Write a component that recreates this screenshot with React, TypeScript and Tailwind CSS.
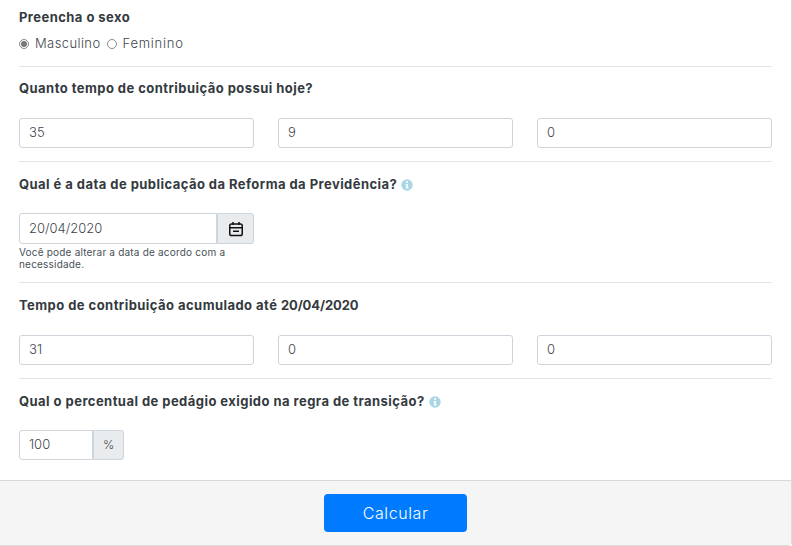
import React from "react";

const font = "font-['Inter','Liberation_Sans',sans-serif]";

function Title({ children, info }: { children: React.ReactNode; info?: boolean }) {
  return (
    <div className="flex items-center h-[18px] text-[13px] font-bold text-[#343a40] whitespace-nowrap tracking-[0.45px]">
      <span>{children}</span>
      {info && (
        <svg viewBox="0 0 12 12" className="w-[12px] h-[12px] ml-[4px]">
          <circle cx="6" cy="6" r="5.7" fill="#a9d6e5" />
          <rect x="5.1" y="2.2" width="1.9" height="1.7" fill="#fff" />
          <path d="M4.5 5h2.5v3.6h.7v1H4.5v-1h.8V6h-.8z" fill="#fff" />
        </svg>
      )}
    </div>
  );
}

function Field({ value, className = "" }: { value: string; className?: string }) {
  return (
    <div className={`h-[30px] flex items-center px-[9px] border border-[#ced4da] bg-white rounded-[3px] text-[13px] font-light text-[#3f464d] ${className}`}>
      {value}
    </div>
  );
}

function Triple({ values }: { values: string[] }) {
  return (
    <div className="grid grid-cols-3 gap-[24px] w-[753px]">
      {values.map((v, i) => (
        <Field key={i} value={v} />
      ))}
    </div>
  );
}

function Radio({ checked }: { checked?: boolean }) {
  return (
    <span className="w-[10px] h-[10px] rounded-full border border-[#8a8a8a] bg-white flex items-center justify-center">
      {checked && <span className="w-[6px] h-[6px] rounded-full bg-[#777777]" />}
    </span>
  );
}

export default function App() {
  return (
    <div className={`${font} w-[792px] h-[546px] bg-white overflow-hidden`}>
      <div className="w-[792px] h-[546px] flex flex-col border-r border-b border-[#dcdcdc] rounded-br-[4px]">
        <div className="flex-1 pl-[19px] pr-[19px] pt-[9px]">
          <Title>Preencha o sexo</Title>
          <div className="flex items-center h-[18px] mt-[8px] text-[13px] font-light text-[#3f464d] tracking-[0.4px]">
            <Radio checked />
            <span className="ml-[6px]">Masculino</span>
            <span className="ml-[6px]"><Radio /></span>
            <span className="ml-[6px] tracking-[0.75px]">Feminino</span>
          </div>
          <div className="h-px bg-[#e3e5e7] mt-[13px] mb-[13px]" />
          <Title>Quanto tempo de contribuição possui hoje?</Title>
          <div className="mt-[20px]"><Triple values={["35", "9", "0"]} /></div>
          <div className="h-px bg-[#e3e5e7] mt-[13px] mb-[14px]" />
          <Title info>Qual é a data de publicação da Reforma da Previdência?</Title>
          <div className="mt-[19px] flex w-[235px] h-[31px]">
            <div className="flex-1 flex items-center px-[9px] border border-[#ced4da] rounded-l-[3px] text-[13px] font-light text-[#3f464d]">20/04/2020</div>
            <div className="w-[37px] flex items-center justify-center bg-[#e9ecef] border border-[#ced4da] rounded-r-[3px]">
              <svg viewBox="0 0 16 16" className="w-[16px] h-[16px]" fill="none" stroke="#111" strokeWidth="1.5">
                <rect x="1.75" y="3" width="12.5" height="11.5" rx="1.8" />
                <path d="M1.75 6.8h12.5M5 1v3M11 1v3M5 10.2h6" />
              </svg>
            </div>
          </div>
          <div className="w-[235px] mt-[3px] text-[10px] leading-[11.5px] text-[#495057] tracking-[0.2px]">Você pode alterar a data de acordo com a necessidade.</div>
          <div className="h-px bg-[#e3e5e7] mt-[12px] mb-[14px]" />
          <Title>Tempo de contribuição acumulado até <span className="tracking-[-0.1px]">20/04/2020</span></Title>
          <div className="mt-[20px]"><Triple values={["31", "0", "0"]} /></div>
          <div className="h-px bg-[#e3e5e7] mt-[13px] mb-[14px]" />
          <Title info>Qual o percentual de pedágio exigido na regra de transição?</Title>
          <div className="mt-[19px] flex h-[30px] w-[105px]">
            <div className="w-[74px] flex items-center px-[9px] border border-[#ced4da] rounded-l-[3px] text-[13px] font-light text-[#3f464d]">100</div>
            <div className="flex-1 flex items-center justify-center bg-[#e9ecef] border border-[#ced4da] rounded-r-[3px] text-[12px] font-light text-[#3f464d]">%</div>
          </div>
        </div>
        <div className="h-[65px] shrink-0 bg-[#f5f5f5] border-t border-[#d9d9d9] flex items-center justify-center pb-[1px]">
          <button className="w-[143px] h-[38px] bg-[#007bff] text-white text-[16px] font-light tracking-[0.6px] rounded-[4px]">Calcular</button>
        </div>
      </div>
    </div>
  );
}
